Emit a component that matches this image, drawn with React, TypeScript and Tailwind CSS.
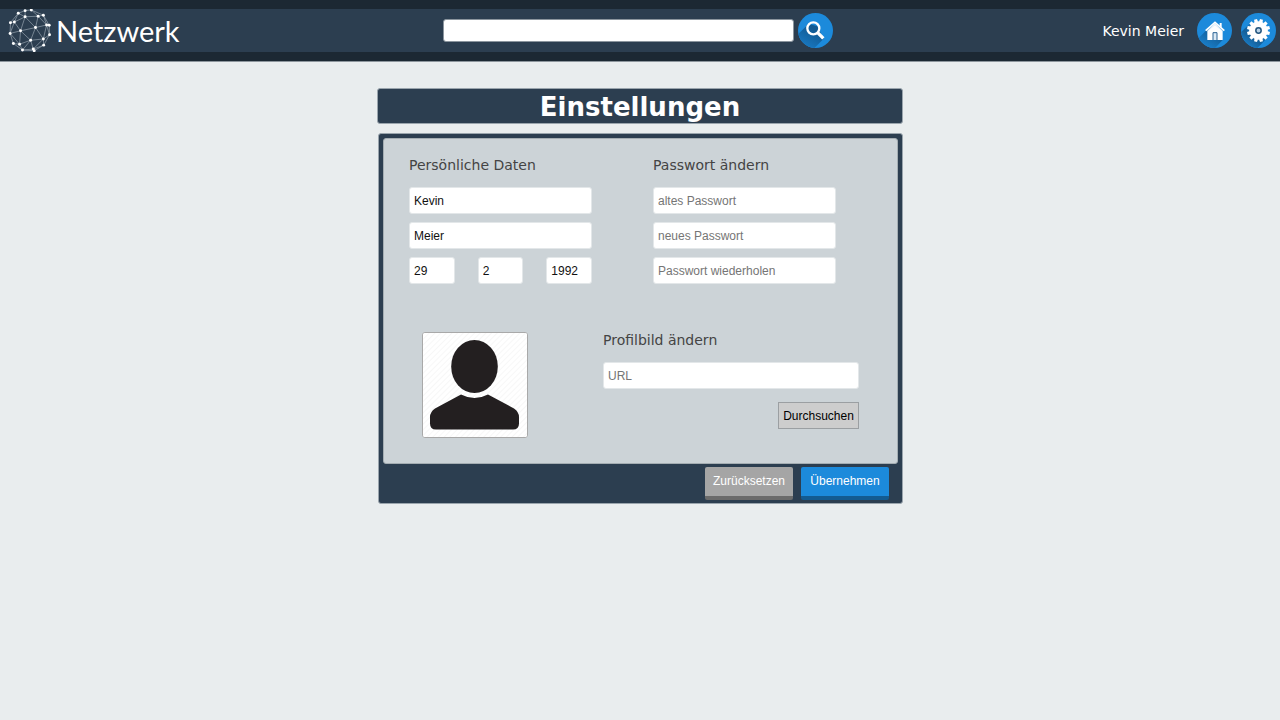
import type { InputHTMLAttributes } from "react";

const sans = "font-['DejaVu_Sans',Verdana,sans-serif]";
const arial = "font-['Liberation_Sans',Arial,sans-serif]";

const nodes: [number, number][] = [
  [56, 40], [77, 32], [96, 30], [77, 51], [117, 49], [133, 46], [32, 69], [44, 67],
  [31, 102], [63, 94], [109, 84], [143, 76], [151, 77], [152, 106], [94, 123], [133, 119],
  [41, 133], [60, 135], [69, 153], [102, 150], [105, 155], [134, 138],
];

const edges: [number, number][] = [
  [0, 1], [1, 2], [2, 5], [0, 3], [1, 3], [2, 4], [3, 4], [4, 5], [0, 6], [0, 7], [6, 7],
  [3, 7], [6, 8], [7, 8], [7, 9], [3, 9], [3, 10], [4, 10], [4, 11], [5, 11], [5, 12],
  [9, 10], [10, 11], [11, 12], [12, 13], [11, 13], [8, 9], [9, 14], [10, 14], [10, 15],
  [11, 15], [13, 15], [13, 21], [14, 15], [14, 17], [9, 17], [8, 17], [8, 16], [16, 17],
  [16, 18], [17, 18], [14, 18], [14, 19], [15, 19], [15, 21], [19, 21], [18, 20], [18, 19], [20, 21],
];

function Logo() {
  return (
    <svg viewBox="26 27 129 132" className="h-[43px] w-[43px]" aria-hidden="true">
      {edges.map(([a, b]) => (
        <line key={`${a}-${b}`} x1={nodes[a][0]} y1={nodes[a][1]} x2={nodes[b][0]} y2={nodes[b][1]} stroke="#aab6c0" strokeWidth="1.8" />
      ))}
      {nodes.map(([x, y]) => (
        <circle key={`${x}-${y}`} cx={x} cy={y} r="4.5" fill="#fff" />
      ))}
    </svg>
  );
}

function SearchIcon() {
  return (
    <svg viewBox="0 0 105 105" className="size-[35px]" aria-hidden="true">
      <defs>
        <clipPath id="searchDisc"><circle cx="52.5" cy="52.5" r="52.5" /></clipPath>
        <linearGradient id="searchShade" x1="0.7" y1="0.2" x2="0.3" y2="0.9">
          <stop offset="0" stopColor="#125a92" />
          <stop offset="1" stopColor="#1a80cd" />
        </linearGradient>
      </defs>
      <g clipPath="url(#searchDisc)">
        <rect width="105" height="105" fill="#1c8adb" />
        <path d="M32 32L-10 74L30 125L77 77L58 40Z" fill="url(#searchShade)" />
      </g>
      <circle cx="46" cy="46" r="18" fill="none" stroke="#fff" strokeWidth="7" />
      <path d="M59 59L76 76" stroke="#fff" strokeWidth="10" />
    </svg>
  );
}

function HomeIcon() {
  return (
    <svg viewBox="0 0 105 105" className="size-[35px]" aria-hidden="true">
      <defs>
        <clipPath id="homeDisc"><circle cx="52.5" cy="52.5" r="52.5" /></clipPath>
        <linearGradient id="homeShade" x1="0.8" y1="0.2" x2="0.3" y2="0.8">
          <stop offset="0" stopColor="#125a92" />
          <stop offset="1" stopColor="#1b86d5" />
        </linearGradient>
      </defs>
      <g clipPath="url(#homeDisc)">
        <rect width="105" height="105" fill="#1c8adb" />
        <path d="M26 54L-20 100L40 120L77 81L60 40Z" fill="url(#homeShade)" />
      </g>
      <path d="M31 53L54 31L77 53V81H31Z" fill="#fff" />
      <path d="M26 53L54 28L82 53" fill="none" stroke="#fff" strokeWidth="5" />
      <path d="M31 55L54 35L77 55" fill="none" stroke="#c3daed" strokeWidth="1.5" />
      <path d="M68 30h6v14l-6-5z" fill="#fff" />
      <path d="M48 81V59h12v22" fill="#dceaf5" stroke="#2b6393" strokeWidth="3" />
    </svg>
  );
}

function GearIcon() {
  return (
    <svg viewBox="0 0 105 105" className="size-[35px]" aria-hidden="true">
      <defs>
        <clipPath id="gearDisc"><circle cx="52.5" cy="52.5" r="52.5" /></clipPath>
        <linearGradient id="gearShade" x1="0.8" y1="0.2" x2="0.3" y2="0.8">
          <stop offset="0" stopColor="#1878c0" />
          <stop offset="0.45" stopColor="#15609a" />
          <stop offset="1" stopColor="#1b86d5" />
        </linearGradient>
      </defs>
      <g clipPath="url(#gearDisc)">
        <rect width="105" height="105" fill="#1c8adb" />
        <path d="M28 30L-20 78L30 124L77 77Z" fill="url(#gearShade)" />
      </g>
      <circle cx="52.5" cy="52.5" r="28" fill="#fff" />
      {Array.from({ length: 12 }, (_, i) => (
        <path key={i} d="M47 27L48 18H57L58 27Z" fill="#fff" transform={`rotate(${i * 30 + 15} 52.5 52.5)`} />
      ))}
      <circle cx="52.5" cy="52.5" r="8" fill="#b9d2e6" stroke="#23557f" strokeWidth="4.5" />
    </svg>
  );
}

function Avatar() {
  return (
    <svg viewBox="0 0 104 104" className="size-[104px]" role="img" aria-label="Profilbild">
      <defs>
        <pattern id="hatch" width="4" height="4" patternUnits="userSpaceOnUse" patternTransform="rotate(45)">
          <rect width="4" height="4" fill="#fff" />
          <rect width="1" height="4" fill="#f7f7f7" />
        </pattern>
      </defs>
      <rect width="104" height="104" fill="url(#hatch)" />
      <ellipse cx="51.5" cy="33.5" rx="23.3" ry="26.5" fill="#231f20" />
      <path d="M38 61.5Q51.5 68.5 65 61.5L91 75.5Q96 79 96 84V90.5Q96 96.5 90 96.5H13Q7 96.5 7 90.5V84Q7 79 12 75.5Z" fill="#231f20" />
    </svg>
  );
}

function Field({ className = "", ...rest }: InputHTMLAttributes<HTMLInputElement>) {
  return (
    <input
      {...rest}
      className={`${arial} h-[27px] w-full min-w-0 rounded-[3px] border border-[#e3e7e9] bg-white px-1 text-xs text-[#111] placeholder:text-[#757575] ${className}`}
    />
  );
}

export default function App() {
  return (
    <div className={`${sans} min-h-screen bg-[#e9edee] text-sm`}>
      <header className="border-b border-[#8d969d] bg-[#1c2833] py-[9px]">
        <div className="grid h-[43px] grid-cols-[1fr_390px_1fr] items-center bg-[#2c3e50] pr-1">
          <a href="#start" className="flex items-center gap-[5px] pl-2 text-white">
            <Logo />
            <span className="font-['Lato',sans-serif] text-[29px] leading-10 font-normal">Netzwerk</span>
          </a>
          <form role="search" className="flex items-center gap-1">
            <input type="search" aria-label="Suche" className="h-[23px] min-w-0 flex-1 rounded-[3px] border border-[#8b959e] bg-white px-1 text-xs" />
            <button type="button" aria-label="Suchen" className="rounded-full"><SearchIcon /></button>
          </form>
          <nav className="flex items-center justify-end">
            <a href="#profil" className="mr-[13px] text-white">Kevin Meier</a>
            <a href="#home" aria-label="Startseite" className="mr-[9px]"><HomeIcon /></a>
            <a href="#einstellungen" aria-label="Einstellungen"><GearIcon /></a>
          </nav>
        </div>
      </header>

      <main className="mx-auto flex max-w-[526px] flex-col gap-[9px] pt-[26px]">
        <h1 className="rounded-[3px] border border-[#9aa5ad] bg-[#2c3e50] pt-[3px] text-center text-[26px] leading-[31px] font-bold text-white">
          Einstellungen
        </h1>

        <form className="ml-px rounded-[3px] border border-[#9aa5ad] bg-[#2c3e50] p-1 pb-[3px]">
          <div className="rounded-[3px] border border-[#a4adb2] bg-[#ccd3d7] px-[25px] pt-4 pb-[25px] text-[#444]">
            <div className="grid grid-cols-[183px_183px] gap-x-[61px]">
              <section>
                <h2 className="mb-3 leading-5">Persönliche Daten</h2>
                <div className="flex flex-col gap-2">
                  <Field aria-label="Vorname" defaultValue="Kevin" />
                  <Field aria-label="Nachname" defaultValue="Meier" />
                  <div className="grid grid-cols-3 gap-[23px]">
                    <Field aria-label="Tag" defaultValue="29" />
                    <Field aria-label="Monat" defaultValue="2" />
                    <Field aria-label="Jahr" defaultValue="1992" />
                  </div>
                </div>
              </section>
              <section>
                <h2 className="mb-3 leading-5">Passwort ändern</h2>
                <div className="flex flex-col gap-2">
                  <Field type="password" aria-label="altes Passwort" placeholder="altes Passwort" />
                  <Field type="password" aria-label="neues Passwort" placeholder="neues Passwort" />
                  <Field type="password" aria-label="Passwort wiederholen" placeholder="Passwort wiederholen" />
                </div>
              </section>
            </div>

            <section className="mt-[46px] flex items-start justify-between px-[13px]">
              <div className="mt-0.5 overflow-hidden rounded-[3px] border border-[#a9a9a9] bg-white">
                <Avatar />
              </div>
              <div className="flex w-64 flex-col">
                <h2 className="mb-3 leading-5">Profilbild ändern</h2>
                <Field type="url" aria-label="URL" placeholder="URL" />
                <button type="button" className={`${arial} mt-[13px] h-[27px] w-[81px] self-end border border-[#9b9fa2] bg-[#cdcdcd] text-xs text-black`}>
                  Durchsuchen
                </button>
              </div>
            </section>
          </div>

          <div className="flex justify-end gap-2 pt-[3px] pr-[9px]">
            <button type="reset" className={`${arial} h-[33px] w-[88px] rounded-[2px] border-b-4 border-[#6b6b6b] bg-[#a5a5a5] pb-px text-xs text-white`}>
              Zurücksetzen
            </button>
            <button type="button" className={`${arial} h-[33px] w-[88px] rounded-[2px] border-b-4 border-[#135b91] bg-[#1c8adb] pb-px text-xs text-white`}>
              Übernehmen
            </button>
          </div>
        </form>
      </main>
    </div>
  );
}
